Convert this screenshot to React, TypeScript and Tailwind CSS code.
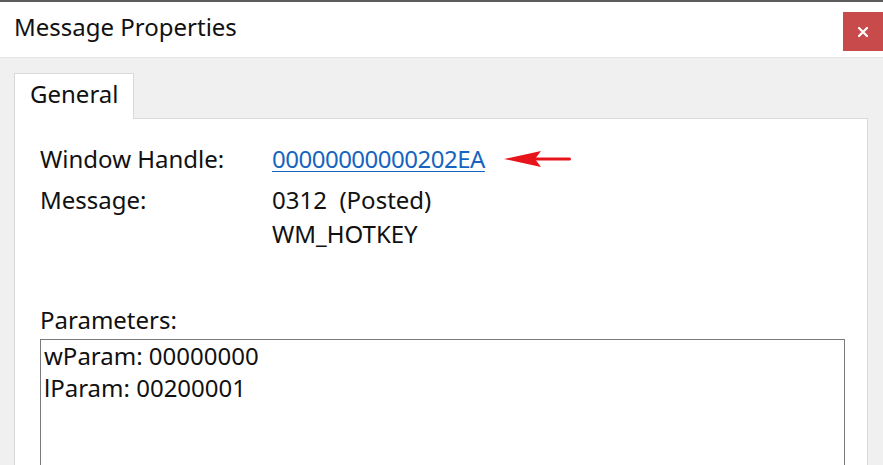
export default function App() {
  return (
    <div
      className="w-[883px] h-[465px] overflow-hidden bg-[#f0f0f0] text-[24px] text-[#111]"
      style={{ fontFamily: '"Noto Sans", "Open Sans", sans-serif' }}
    >
      {/* Title bar */}
      <div className="h-[58px] bg-white border-t-2 border-[#5c5c5c] border-b border-b-[#e6e6e6] flex justify-between">
        <div className="pl-[14px] pt-[10px] leading-[30px]">Message Properties</div>
        <button className="mt-[10px] w-[40px] h-[39px] bg-[#c94a4a] flex items-center justify-center">
          <svg width="12" height="12" viewBox="0 0 12 12">
            <path d="M2 2L10 10M10 2L2 10" stroke="white" strokeWidth="2.2" strokeLinecap="round" />
          </svg>
        </button>
      </div>

      {/* Body */}
      <div className="pl-[14px] pt-[15px]">
        <div className="relative z-10 -mb-px w-[120px] h-[46px] bg-white border border-b-0 border-[#d9d9d9] pl-[15px] pt-[5px] leading-[30px]">
          General
        </div>
        <div className="w-[854px] h-[400px] bg-white border border-[#d9d9d9] pl-[25px] pt-[23px] leading-[34px]">
          <div className="flex">
            <div className="w-[232px]">Window Handle:</div>
            <div className="flex items-center">
              <span className="text-[#1565c0] underline underline-offset-[3px] decoration-1 tracking-[-0.5px]">00000000000202EA</span>
              <svg className="ml-[19px]" width="68" height="18" viewBox="0 0 68 18">
                <path d="M0 9 L37 1 L31 9 L37 17 Z" fill="#e8141b" />
                <rect x="30" y="7.5" width="37" height="3" rx="1.5" fill="#e8141b" />
              </svg>
            </div>
          </div>
          <div className="flex mt-[7px]">
            <div className="w-[232px]">Message:</div>
            <div>
              <div className="whitespace-pre">0312  (Posted)</div>
              <div>WM_HOTKEY</div>
            </div>
          </div>
          <div className="mt-[52px]">Parameters:</div>
          <div className="mt-[2px] w-[805px] h-[200px] border border-[#7a7a7a] pl-[3px] leading-[32px]">
            <div>wParam: 00000000</div>
            <div>lParam: 00200001</div>
          </div>
        </div>
      </div>
    </div>
  )
}
